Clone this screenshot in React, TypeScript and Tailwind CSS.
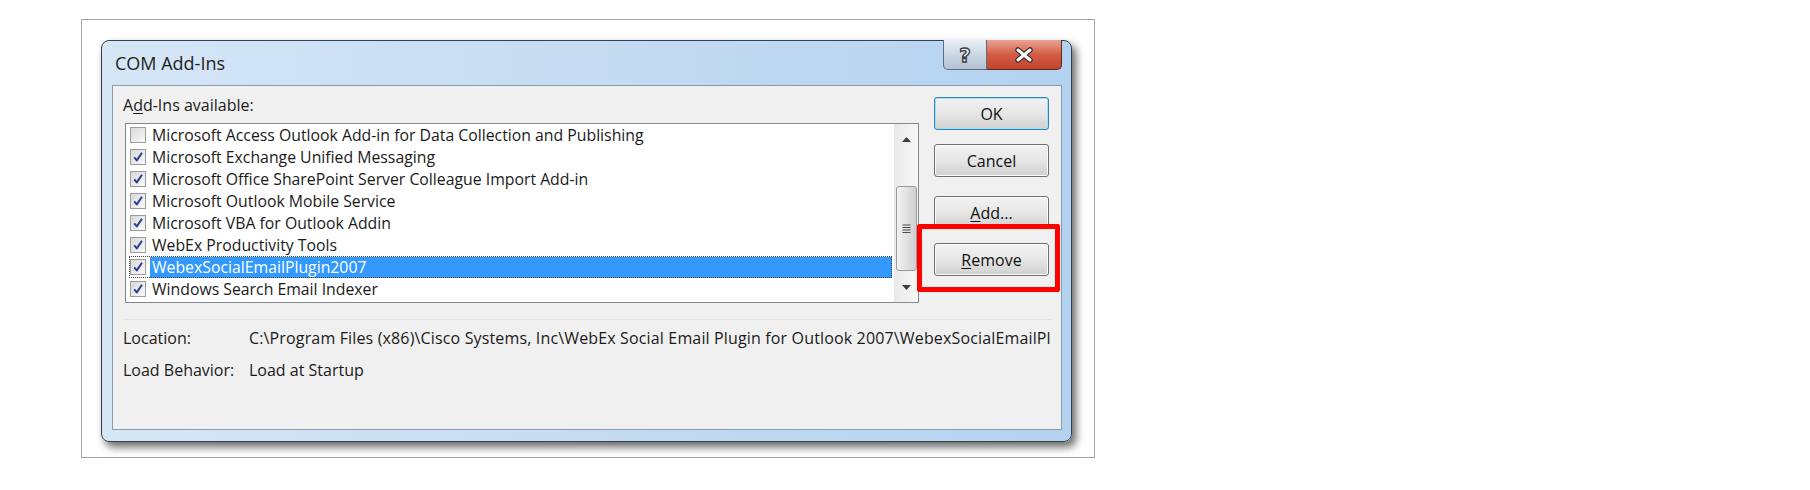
import React from "react";

const addIns = [
  { name: "Microsoft Access Outlook Add-in for Data Collection and Publishing", checked: false },
  { name: "Microsoft Exchange Unified Messaging", checked: true },
  { name: "Microsoft Office SharePoint Server Colleague Import Add-in", checked: true },
  { name: "Microsoft Outlook Mobile Service", checked: true },
  { name: "Microsoft VBA for Outlook Addin", checked: true },
  { name: "WebEx Productivity Tools", checked: true },
  { name: "WebexSocialEmailPlugin2007", checked: true, selected: true },
  { name: "Windows Search Email Indexer", checked: true },
];

const CheckBox = ({ checked }: { checked: boolean }) => (
  <div className="w-[16px] h-[16px] border border-[#9c9c9c] bg-gradient-to-br from-[#d8d8d8] to-[#fafafa] flex items-center justify-center shrink-0">
    {checked ? (
      <svg width="12" height="12" viewBox="0 0 12 12">
        <path d="M2.2 6.4 L4.8 9.4 L10 1.8" stroke="#2a3f92" strokeWidth="2" fill="none" strokeLinejoin="round" />
      </svg>
    ) : null}
  </div>
);

const DlgButton = ({ label, hot, focused }: { label: string; hot: number; focused?: boolean }) => (
  <div
    className={
      focused
        ? "w-[115px] h-[33px] rounded-[3px] border border-[#3c7fb1] shadow-[inset_0_0_0_1px_#9fe0fb] bg-gradient-to-b from-[#f3f3f3] via-[#e6e6e6] to-[#d2d2d2] flex items-center justify-center text-[#111]"
        : "w-[115px] h-[33px] rounded-[3px] border border-[#707070] shadow-[inset_0_0_0_1px_#fbfbfb] bg-gradient-to-b from-[#f3f3f3] via-[#e6e6e6] to-[#d0d0d0] flex items-center justify-center text-[#111]"
    }
  >
    {hot >= 0 ? (
      <span>
        {label.slice(0, hot)}
        <span className="underline underline-offset-2">{label.slice(hot, hot + 1)}</span>
        {label.slice(hot + 1)}
      </span>
    ) : (
      <span>{label}</span>
    )}
  </div>
);

export default function App() {
  return (
    <div
      className="w-[1810px] h-[490px] bg-white overflow-hidden text-[16px] text-[#1a1a1a]"
      style={{ fontFamily: '"Open Sans", "Noto Sans", sans-serif' }}
    >
      <div className="ml-[81px] mt-[19px] w-[1014px] h-[439px] border border-[#a3a3a3] pt-[20px] pl-[19px]">
        {/* dialog window */}
        <div className="w-[971px] h-[402px] rounded-[8px] border border-[#34424f] bg-gradient-to-r from-[#d5e6f6] via-[#c5dcf2] to-[#b3d2f0] shadow-[4px_5px_9px_rgba(0,0,0,0.6)] flex flex-col pl-[10px] pr-[9px] pb-[11px]">
          {/* title bar */}
          <div className="h-[44px] flex justify-between shrink-0">
            <div className="pl-[3px] pt-[9px] text-[18px] text-[#1e1e1e]">COM Add-Ins</div>
            <div className="flex -mt-px">
              <div className="w-[44px] h-[30px] rounded-bl-[5px] border border-[#5f6e7d] border-t-0 bg-gradient-to-b from-[#e6eef6] via-[#cbd8e5] to-[#b1c2d3] flex items-center justify-center">
                <span
                  className="text-[20px] font-bold text-[#e8edf2] leading-none [-webkit-text-stroke:1.3px_#3c3c3c]"
                  style={{ fontFamily: '"DejaVu Sans", sans-serif' }}
                >
                  ?
                </span>
              </div>
              <div className="w-[75px] h-[30px] rounded-br-[5px] border border-[#5a2a22] border-t-0 border-l-0 bg-gradient-to-b from-[#e8a493] via-[#d35c45] to-[#c1432d] flex items-center justify-center">
                <svg width="22" height="16" viewBox="0 0 22 16">
                  <path d="M5 3 L17 13 M17 3 L5 13" stroke="#3b2a28" strokeWidth="5.5" strokeLinecap="round" />
                  <path d="M5 3 L17 13 M17 3 L5 13" stroke="#ffffff" strokeWidth="3" strokeLinecap="round" />
                </svg>
              </div>
            </div>
          </div>

          {/* client panel */}
          <div className="flex-1 bg-[#f0f0f0] border border-[#8c9bab] pt-[9px] pl-[10px]">
            <div className="flex">
              <div className="flex flex-col">
                <div className="h-[20px] leading-[20px]">
                  A<span className="underline underline-offset-2">d</span>d-Ins available:
                </div>
                {/* list box */}
                <div className="mt-[8px] ml-[2px] w-[794px] h-[180px] border border-[#828790] bg-white flex">
                  <div className="flex-1 pl-[3px] text-[15.8px]">
                    {addIns.map((item) => (
                      <div
                        key={item.name}
                        className={
                          item.selected
                            ? "h-[22px] flex items-center pl-[1px] outline outline-1 outline-dotted outline-[#444] -outline-offset-1"
                            : "h-[22px] flex items-center pl-[1px]"
                        }
                      >
                        <CheckBox checked={item.checked} />
                        <div
                          className={
                            item.selected
                              ? "ml-[4px] flex-1 h-[21px] bg-[#3399ff] text-white pl-[2px] leading-[21px] whitespace-nowrap"
                              : "ml-[4px] pl-[2px] leading-[21px] whitespace-nowrap"
                          }
                        >
                          {item.name}
                        </div>
                      </div>
                    ))}
                  </div>
                  {/* scrollbar */}
                  <div className="w-[24px] ml-[2px] bg-gradient-to-r from-[#e9e9e9] to-[#f7f7f7] flex flex-col items-center">
                    <div className="h-[28px] flex items-center justify-center pt-[2px]">
                      <svg width="9" height="5" viewBox="0 0 9 5">
                        <path d="M0 5 L4.5 0 L9 5 Z" fill="#3d3d3d" />
                      </svg>
                    </div>
                    <div className="mt-[34px] w-[21px] h-[85px] rounded-[3px] border border-[#9a9a9a] bg-gradient-to-r from-[#f2f2f2] via-[#e2e2e2] to-[#cfcfcf] flex items-center justify-center">
                      <svg width="9" height="9" viewBox="0 0 9 9">
                        <path d="M0.5 1 H8.5 M0.5 3.5 H8.5 M0.5 6 H8.5 M0.5 8.5 H8.5" stroke="#4a4a4a" strokeWidth="1" />
                      </svg>
                    </div>
                    <div className="flex-1 flex items-end justify-center pb-[12px]">
                      <svg width="9" height="5" viewBox="0 0 9 5">
                        <path d="M0 0 L9 0 L4.5 5 Z" fill="#3d3d3d" />
                      </svg>
                    </div>
                  </div>
                </div>
              </div>

              {/* buttons */}
              <div className="ml-[15px] mt-[2px] flex flex-col relative">
                <DlgButton label="OK" hot={-1} focused />
                <div className="mt-[14px]">
                  <DlgButton label="Cancel" hot={-1} />
                </div>
                <div className="mt-[19px]">
                  <DlgButton label="Add..." hot={0} />
                </div>
                <div className="mt-[14px]">
                  <DlgButton label="Remove" hot={0} />
                </div>
                <div className="absolute left-[-17px] top-[127px] w-[143px] h-[68px] border-[5px] border-[#ff0000] rounded-[2px]" />
              </div>
            </div>

            <div className="mt-[16px] ml-[2px] w-[927px] h-px bg-[#dde3e8]" />

            <div className="mt-[8px] flex h-[20px] leading-[20px]">
              <div className="w-[126px]">Location:</div>
              <div className="w-[803px] whitespace-nowrap overflow-hidden tracking-[0.15px]">
                C:\Program Files (x86)\Cisco Systems, Inc\WebEx Social Email Plugin for Outlook 2007\WebexSocialEmailPl
              </div>
            </div>
            <div className="mt-[12px] flex h-[20px] leading-[20px]">
              <div className="w-[126px]">Load Behavior:</div>
              <div>Load at Startup</div>
            </div>
          </div>
        </div>
      </div>
    </div>
  );
}
